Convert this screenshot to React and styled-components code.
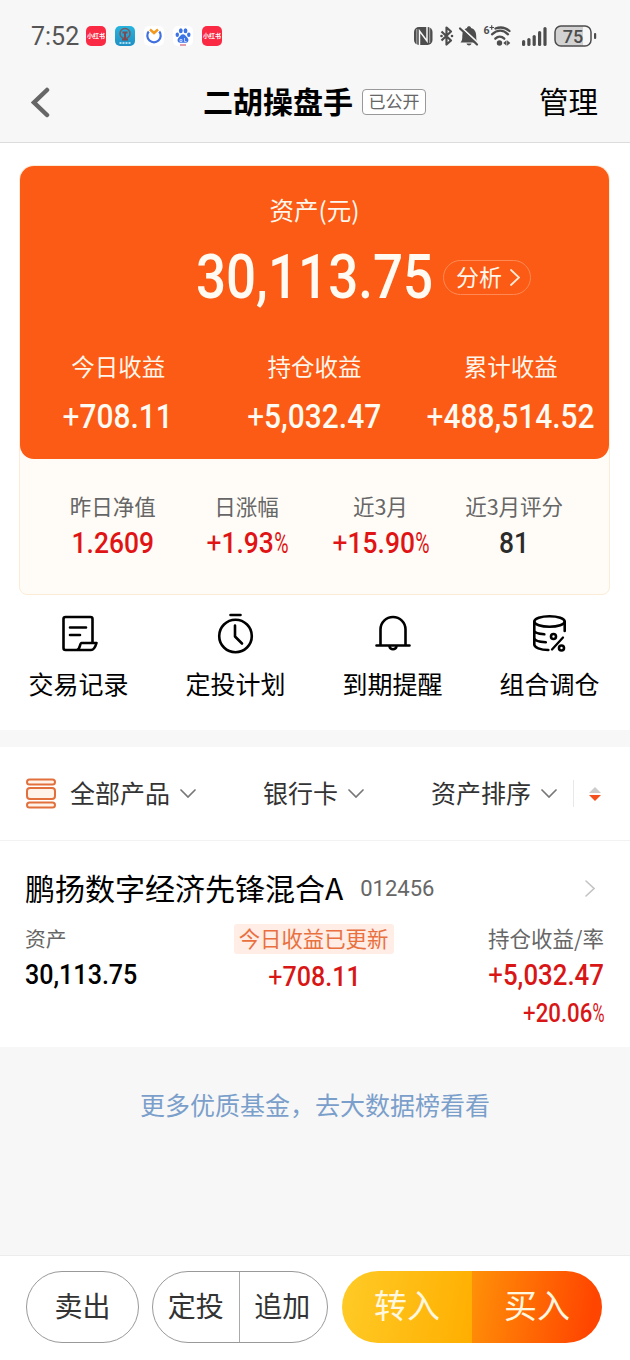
import React from 'react';
import styled, { createGlobalStyle } from 'styled-components';

const GlobalStyle = createGlobalStyle`
  * {
    box-sizing: border-box;
  }

  body {
    margin: 0;
    background: #fff;
    font-family: 'Noto Sans CJK SC', sans-serif;
    color: #000;
  }
`;

const Page = styled.div`
  width: 630px;
  height: 1360px;
  display: flex;
  flex-direction: column;
  overflow: hidden;
  background: #fff;
`;

const Line = styled.div`
  height: ${({ h }) => h}px;
  line-height: ${({ h }) => h}px;
  font-size: ${({ size }) => size}px;
  color: ${({ color }) => color || 'inherit'};
  white-space: nowrap;
`;

/* header */

const Header = styled.header`
  height: 143px;
  background: #f7f7f7;
  border-bottom: 1px solid #dcdcdc;
`;

const StatusBar = styled.div`
  height: 72px;
  padding: 0 33px 0 31px;
  display: flex;
  align-items: center;
  justify-content: space-between;
`;

const StatusGroup = styled.div`
  display: flex;
  align-items: center;
`;

const Clock = styled.span`
  width: 55px;
  padding-top: 2px;
  font: 400 25px/30px Roboto, sans-serif;
  color: #555;
`;

const AppIcon = styled.div`
  width: 20px;
  height: 20px;
  margin-right: 9px;
  border-radius: 5px;
  overflow: hidden;
  display: flex;
  align-items: center;
  justify-content: center;
  background: ${({ bg }) => bg};
  color: #fff;
  font-size: 6px;
  font-weight: 700;
  line-height: 20px;
  white-space: nowrap;
`;

const Nav = styled.div`
  height: 60px;
  padding: 0 32px 0 31px;
  display: grid;
  grid-template-columns: 172px 1fr auto;
  align-items: center;
`;

const NavTitle = styled.div`
  display: flex;
  align-items: center;

  > h1 {
    margin: 0;
    padding-bottom: 5px;
    font-size: 30px;
    line-height: 40px;
    font-weight: 700;
  }
`;

const OpenTag = styled.span`
  width: 64px;
  height: 26px;
  margin-left: 9px;
  border: 1px solid #999;
  border-radius: 4px;
  background: #fff;
  color: #666;
  font-size: 17px;
  line-height: 22px;
  text-align: center;
`;

const NavAction = styled.span`
  padding-bottom: 5px;
  font-size: 29.5px;
  line-height: 40px;
`;

/* numbers */

const NumText = styled.div`
  height: ${({ $size }) => Math.round($size * 1.2)}px;
  display: flex;
  font-family: Roboto, sans-serif;
  font-size: ${({ $size }) => $size}px;
  line-height: ${({ $size }) => Math.round($size * 1.2)}px;
  font-weight: 500;
  color: ${({ $color }) => $color};
  white-space: nowrap;
  transform: scaleX(${({ $fit }) => $fit || 0.88});
  transform-origin: ${({ $origin }) => $origin || 'center'};

  > i {
    font-style: normal;
    font-weight: 400;
  }
`;

const Percent = styled.span`
  width: 0.52em;
  font-weight: 400;
  transform: scaleX(0.74);
  transform-origin: left;
`;

const Num = ({ value, size, color, fit, origin }) => {
  const plus = value.startsWith('+');
  const percent = value.endsWith('%');
  const digits = value.replace(/[+%]/g, '');

  return (
    <NumText $size={size} $color={color} $fit={fit} $origin={origin}>
      {plus && <i>+</i>}
      {digits}
      {percent && <Percent>%</Percent>}
    </NumText>
  );
};

/* asset card */

const Card = styled.section`
  height: 430px;
  margin: 22px 20px 0 19px;
  border: 1px solid #faecd6;
  border-radius: 14px 14px 8px 8px;
  background: #fffcf7;
`;

const Panel = styled.div`
  height: 293px;
  border-radius: 14px;
  background: #fb5b14;
  color: #fff6ec;
  padding-top: 26px;
`;

const PanelTitle = styled(Line)`
  text-align: center;
`;

const Total = styled.div`
  height: 72px;
  margin-top: 14px;
  display: grid;
  grid-template-columns: 1fr 235px 1fr;
  align-items: center;
`;

const TotalValue = styled.div`
  display: flex;
  justify-content: center;
`;

const Analyse = styled.div`
  width: 88px;
  height: 35px;
  margin-left: 11px;
  padding-left: 12px;
  display: flex;
  align-items: center;
  gap: 8px;
  border: 1px solid #ff8a55;
  border-radius: 18px;
  font-size: 23px;
  line-height: 30px;

  > span {
    padding-bottom: 3px;
  }
`;

const Profits = styled.div`
  margin-top: 37px;
  display: grid;
  grid-template-columns: repeat(3, 1fr);
`;

const Cell = styled.div`
  min-width: 0;
  display: flex;
  flex-direction: column;
  align-items: center;
  gap: ${({ $gap }) => $gap || 0}px;
`;

const Stats = styled.div`
  padding: 33px 28px 0 26px;
  display: grid;
  grid-template-columns: repeat(4, 1fr);
`;

/* actions */

const Actions = styled.nav`
  height: 135px;
  padding-top: 15px;
  display: grid;
  grid-template-columns: repeat(4, 157px);
`;

const Gap = styled.div`
  height: 17px;
  background: #f7f7f7;
`;

/* filters */

const Filters = styled.div`
  height: 94px;
  padding: 0 29px 0 25px;
  display: flex;
  align-items: center;
  border-bottom: 1px solid #f2f2f2;
`;

const Filter = styled.div`
  margin-left: ${({ $left }) => $left}px;
  display: flex;
  align-items: center;
  gap: 10px;
  color: #333;
  font-size: 25px;
  line-height: 34px;

  > span {
    padding-bottom: 3px;
  }
`;

const Divider = styled.div`
  width: 1px;
  height: 27px;
  margin: 0 15px 0 16px;
  background: #e8e8e8;
`;

/* fund */

const Fund = styled.section`
  height: 206px;
  padding: 27px 26px 0 25px;
`;

const FundHead = styled.div`
  height: 40px;
  display: flex;
  align-items: center;

  > h2 {
    margin: 0;
    padding-bottom: 3px;
    font-size: 30px;
    line-height: 38px;
    font-weight: 400;
  }

  > span {
    margin-left: 17px;
    padding-top: 2px;
    font: 400 22px/28px Roboto, sans-serif;
    color: #666;
  }

  > svg {
    margin-left: auto;
    margin-right: 9px;
  }
`;

const FundBody = styled.div`
  margin-top: 15px;
  display: grid;
  grid-template-columns: 1fr 160px 1fr;
`;

const FundCol = styled.div`
  padding-top: 1px;
  display: flex;
  flex-direction: column;
  align-items: ${({ $align }) => $align};
  gap: 6px;
`;

const Updated = styled.div`
  width: 160px;
  height: 30px;
  margin-right: 2px;
  border-radius: 3px;
  background: #ffede6;
  color: #e9703f;
  font-size: 21.4px;
  line-height: 27px;
  text-align: center;
`;

const More = styled.div`
  height: 208px;
  padding-top: 39px;
  background: #f7f7f7;
  color: #7b9fcb;
  font-size: 25px;
  line-height: 36px;
  text-align: center;
`;

/* bottom bar */

const BottomBar = styled.footer`
  height: 105px;
  padding: 15px 0 0 26px;
  display: flex;
  border-top: 1px solid #ececec;
`;

const Pill = styled.div`
  width: ${({ $w }) => $w}px;
  height: 72px;
  margin-right: ${({ $right }) => $right}px;
  display: flex;
  overflow: hidden;
  border: 1px solid #999;
  border-radius: 36px;
  color: #333;
  font-size: 28px;
  line-height: 67px;
  text-align: center;

  > div {
    flex: 1;
  }

  > div + div {
    border-left: 1px solid #aaa;
    padding-right: 2px;
  }
`;

const TradePill = styled(Pill)`
  border: 0;
  color: #fff8e0;
  font-size: 33px;

  > div:first-child {
    background: linear-gradient(100deg, #ffcb27, #ffae00);
  }

  > div + div {
    border: 0;
    padding: 0;
    background: linear-gradient(100deg, #ff9108, #ff4500 90%);
  }
`;

const Chevron = ({ dir, color = '#777', w = 16, h = 9, stroke = 1.7 }) => {
  const points = {
    down: `1,1 ${w / 2},${h - 1} ${w - 1},1`,
    right: `1,1 ${w - 1},${h / 2} 1,${h - 1}`,
    left: `${w - 3},3 3,${h / 2} ${w - 3},${h - 3}`,
  };

  return (
    <svg width={w} height={h} fill="none" stroke={color} strokeWidth={stroke} strokeLinecap="round">
      <polyline points={points[dir]} />
    </svg>
  );
};

const StatusIcons = () => (
  <svg width="184" height="26" viewBox="413 23 184 26" fill="#4d4d4d">
    {/* nfc */}
    <rect x="414" y="27" width="18.500" height="18" rx="5" />
    <path d="M419.500 45V31l7.500 10V27" fill="none" stroke="#f7f7f7" strokeWidth="1.500" />
    <path d="M416.800 45V29M429.700 27v16" fill="none" stroke="#f7f7f7" strokeWidth="0.600" />
    {/* bluetooth */}
    <path
      d="M441.500 31.500l9.500 9-4.500 4V27.500l4.500 4-9.500 9"
      fill="none"
      stroke="#4d4d4d"
      strokeWidth="2.200"
      strokeLinejoin="round"
    />
    <circle cx="441.500" cy="36" r="1.300" />
    <circle cx="452" cy="36" r="1.300" />
    {/* muted bell */}
    <path d="M460.500 42.500c1.500-1.500 1.800-3 1.800-6.500 0-4.500 1.500-7.200 4.700-8 0-2.300 4-2.300 4 0 3.700 1 5.200 4 5.200 8 0 3.500.3 5 1.800 6.500z" />
    <path d="M466.500 43.600h5c-.5 2.500-4.500 2.500-5 0z" />
    <path d="M460.500 26.600l18.500 17" stroke="#f7f7f7" strokeWidth="1.800" />
    <path d="M460 28.500l17 16" stroke="#4d4d4d" strokeWidth="2.200" strokeLinecap="round" />
    {/* wifi */}
    <text x="483.500" y="34" fontFamily="Roboto, sans-serif" fontSize="10.500" fontWeight="700">
      6
    </text>
    <path d="M489.500 27.500h4.500M491.700 25.300v4.500" stroke="#4d4d4d" strokeWidth="1.200" />
    <g fill="none" stroke="#4d4d4d" strokeWidth="2.300" strokeLinecap="round">
      <path d="M495.500 28.500c5.500-2 10.500-.5 14 2.500" />
      <path d="M492 34.300c5.500-4.800 11-4.800 16 0" />
      <path d="M495.300 38.700c2.700-2.600 6.300-2.600 9 0" />
    </g>
    <circle cx="499.500" cy="43" r="2.700" />
    <path d="M503.300 43l3.200-2.800v5.600zM510.300 43l-3.200-2.800v5.600z" />
    {/* signal */}
    <rect x="522" y="40" width="3.200" height="6" rx="1.600" />
    <rect x="527.300" y="38" width="3.200" height="8" rx="1.600" />
    <rect x="532.600" y="35" width="3.200" height="11" rx="1.600" />
    <rect x="538" y="31" width="3.200" height="15" rx="1.600" />
    <rect x="543.400" y="27" width="3.200" height="19" rx="1.600" />
    {/* battery */}
    <rect x="555" y="26" width="36" height="20" rx="6" fill="#f7f7f7" />
    <path d="M561 26h22v20h-22a6 6 0 0 1-6-6v-8a6 6 0 0 1 6-6z" fill="#d2d2d2" />
    <rect x="555" y="26" width="36" height="20" rx="6" fill="none" stroke="#4d4d4d" strokeWidth="1.500" />
    <rect x="594" y="33" width="2.200" height="6" rx="1" />
    <text x="573" y="42.500" textAnchor="middle" fontFamily="Roboto, sans-serif" fontSize="18" fontWeight="500">
      75
    </text>
  </svg>
);

const RailwayIcon = () => (
  <svg width="20" height="20" fill="none">
    <circle cx="10" cy="7.500" r="5" stroke="#7b5a62" strokeWidth="1.500" />
    <path d="M7.500 6.500h5M10 6.500v6M7 13.500h6" stroke="#7b4a52" strokeWidth="2" />
    <path d="M4.500 17h11" stroke="#d5f2fb" strokeWidth="1.500" strokeDasharray="2 1" />
  </svg>
);

const RingIcon = () => (
  <svg width="20" height="20" fill="none">
    <path d="M4.700 5.500a6.700 6.700 0 1 0 10.600 0" stroke="#3f6fe0" strokeWidth="2.200" />
    <path d="M6 3.500l4 3.500 4-3.500" stroke="#f39a1e" strokeWidth="2.500" />
  </svg>
);

const PawIcon = () => (
  <svg width="20" height="20" fill="#3b74e4">
    <ellipse cx="7.800" cy="4.800" rx="1.900" ry="2.500" />
    <ellipse cx="12.500" cy="4.800" rx="1.900" ry="2.500" />
    <ellipse cx="4.300" cy="8.800" rx="1.700" ry="2.200" />
    <ellipse cx="15.800" cy="8.800" rx="1.700" ry="2.200" />
    <path d="M10 8.300c2 0 2.500 1.700 4 3 2.500 2.300 1.500 5.500-1 5.500H7c-2.500 0-3.500-3.200-1-5.500 1.500-1.300 2-3 4-3z" />
    <path d="M7 13.500h2v2H7zM11.500 12v3.500h2" fill="none" stroke="#cfd8ff" strokeWidth=".9" />
    <path d="M7 19h6" stroke="#c43c5c" strokeWidth="1.200" />
  </svg>
);

const ActionIcon = ({ children }) => (
  <svg
    width="44"
    height="46"
    viewBox="0 0 44 46"
    fill="none"
    stroke="#000"
    strokeWidth="2.600"
    strokeLinecap="round"
    strokeLinejoin="round"
  >
    {children}
  </svg>
);

const actions = [
  {
    name: '交易记录',
    icon: (
      <ActionIcon>
        <path d="M35.500 32V9a2 2 0 0 0-2-2h-25a2 2 0 0 0-2 2v29a2 2 0 0 0 2 2H34c3 0 4.500-3.500 5.500-7H24.500c-2 0-1 7-5 7" />
        <path d="M13 17.500h16M13 25h10" />
      </ActionIcon>
    ),
  },
  {
    name: '定投计划',
    icon: (
      <ActionIcon>
        <circle cx="21.500" cy="26" r="16.300" />
        <path d="M16.500 5h10M21 15.500v11l7 7" />
      </ActionIcon>
    ),
  },
  {
    name: '到期提醒',
    icon: (
      <ActionIcon>
        <path d="M9.500 35V19.500a12.500 12.500 0 0 1 25 0V35M5.500 35.500h33" />
        <path d="M18.500 36.500a3.600 3.600 0 0 0 7 0" />
      </ActionIcon>
    ),
  },
  {
    name: '组合调仓',
    icon: (
      <ActionIcon>
        <ellipse cx="21.500" cy="11.500" rx="15.200" ry="5.300" />
        <path d="M6.300 12v22.500c0 3 6 5.500 14 5.500M36.700 12v9M6.300 20.500c0 2.200 4 3.300 10 3.800M6.300 28c0 2.500 4.500 3.800 11.500 4.200" />
        <circle cx="25.500" cy="26.500" r="2.500" />
        <circle cx="33.500" cy="38" r="2.500" />
        <path d="M35 27.500L24 39.500" strokeWidth="2.300" />
      </ActionIcon>
    ),
  },
];

const profits = [
  { label: '今日收益', value: '+708.11' },
  { label: '持仓收益', value: '+5,032.47' },
  { label: '累计收益', value: '+488,514.52' },
];

const stats = [
  { label: '昨日净值', value: '1.2609', color: '#e01414' },
  { label: '日涨幅', value: '+1.93%', color: '#e01414' },
  { label: '近3月', value: '+15.90%', color: '#e01414' },
  { label: '近3月评分', value: '81', color: '#2b2b2b' },
];

const App = () => {
  return (
    <>
      <GlobalStyle />
      <Page>
        <Header>
          <StatusBar>
            <StatusGroup>
              <Clock>7:52</Clock>
              <AppIcon bg="#fa2a45">小红书</AppIcon>
              <AppIcon bg="linear-gradient(#27b5de, #1f8fc4)">
                <RailwayIcon />
              </AppIcon>
              <AppIcon bg="#fff">
                <RingIcon />
              </AppIcon>
              <AppIcon bg="#fff">
                <PawIcon />
              </AppIcon>
              <AppIcon bg="#fa2a45">小红书</AppIcon>
            </StatusGroup>
            <StatusIcons />
          </StatusBar>
          <Nav>
            <Chevron dir="left" color="#666" w={19} h={31} stroke={4.5} />
            <NavTitle>
              <h1>二胡操盘手</h1>
              <OpenTag>已公开</OpenTag>
            </NavTitle>
            <NavAction>管理</NavAction>
          </Nav>
        </Header>

        <Card>
          <Panel>
            <PanelTitle h={35} size={24.5}>
              资产(元)
            </PanelTitle>
            <Total>
              <span />
              <TotalValue>
                <Num value="30,113.75" size={60.5} color="#fffaf2" fit={0.875} />
              </TotalValue>
              <Analyse>
                <span>分析</span>
                <Chevron dir="right" color="#ffe9d8" w={10} h={17} stroke={1.8} />
              </Analyse>
            </Total>
            <Profits>
              {profits.map(({ label, value }) => (
                <Cell key={label} $gap={14}>
                  <Line h={32} size={23.5}>
                    {label}
                  </Line>
                  <Num value={value} size={34} color="#fffaf2" />
                </Cell>
              ))}
            </Profits>
          </Panel>
          <Stats>
            {stats.map(({ label, value, color }) => (
              <Cell key={label} $gap={5}>
                <Line h={28} size={21.5} color="#666">
                  {label}
                </Line>
                <Num value={value} size={30} color={color} />
              </Cell>
            ))}
          </Stats>
        </Card>

        <Actions>
          {actions.map(({ name, icon }) => (
            <Cell key={name} $gap={10}>
              {icon}
              <Line h={34} size={25}>
                {name}
              </Line>
            </Cell>
          ))}
        </Actions>
        <Gap />

        <Filters>
          <svg width="32" height="32" fill="#fff3ea" stroke="#e2703c" strokeWidth="2">
            <rect x="2" y="1.500" width="28" height="5" rx="2.500" />
            <rect x="2" y="10" width="28" height="11" rx="3" />
            <rect x="2" y="24.500" width="28" height="5" rx="2.500" />
          </svg>
          <Filter $left={13}>
            <span>全部产品</span>
            <Chevron dir="down" />
          </Filter>
          <Filter $left={67}>
            <span>银行卡</span>
            <Chevron dir="down" />
          </Filter>
          <Filter $left={67}>
            <span>资产排序</span>
            <Chevron dir="down" />
          </Filter>
          <Divider />
          <svg width="12" height="16">
            <path d="M0 7l6-6 6 6z" fill="#ccc" />
            <path d="M0 9l6 6 6-6z" fill="#f4511e" />
          </svg>
        </Filters>

        <Fund>
          <FundHead>
            <h2>鹏扬数字经济先锋混合A</h2>
            <span>012456</span>
            <Chevron dir="right" color="#c4c4c4" w={10} h={17} stroke={1.6} />
          </FundHead>
          <FundBody>
            <FundCol $align="flex-start">
              <Line h={28} size={20.8} color="#666">
                资产
              </Line>
              <Num value="30,113.75" size={28.5} color="#000" origin="left" />
            </FundCol>
            <FundCol $align="center">
              <Updated>今日收益已更新</Updated>
              <Num value="+708.11" size={28.5} color="#d81616" />
            </FundCol>
            <FundCol $align="flex-end">
              <Line h={28} size={21.5} color="#666">
                持仓收益/率
              </Line>
              <Num value="+5,032.47" size={29} color="#d81616" fit={0.89} origin="right" />
              <Num value="+20.06%" size={25} color="#d81616" fit={0.89} origin="right" />
            </FundCol>
          </FundBody>
        </Fund>

        <More>更多优质基金，去大数据榜看看</More>

        <BottomBar>
          <Pill $w={113} $right={13}>
            <div>卖出</div>
          </Pill>
          <Pill $w={176} $right={14}>
            <div>定投</div>
            <div>追加</div>
          </Pill>
          <TradePill $w={260} $right={0}>
            <div>转入</div>
            <div>买入</div>
          </TradePill>
        </BottomBar>
      </Page>
    </>
  );
};

export default App;
